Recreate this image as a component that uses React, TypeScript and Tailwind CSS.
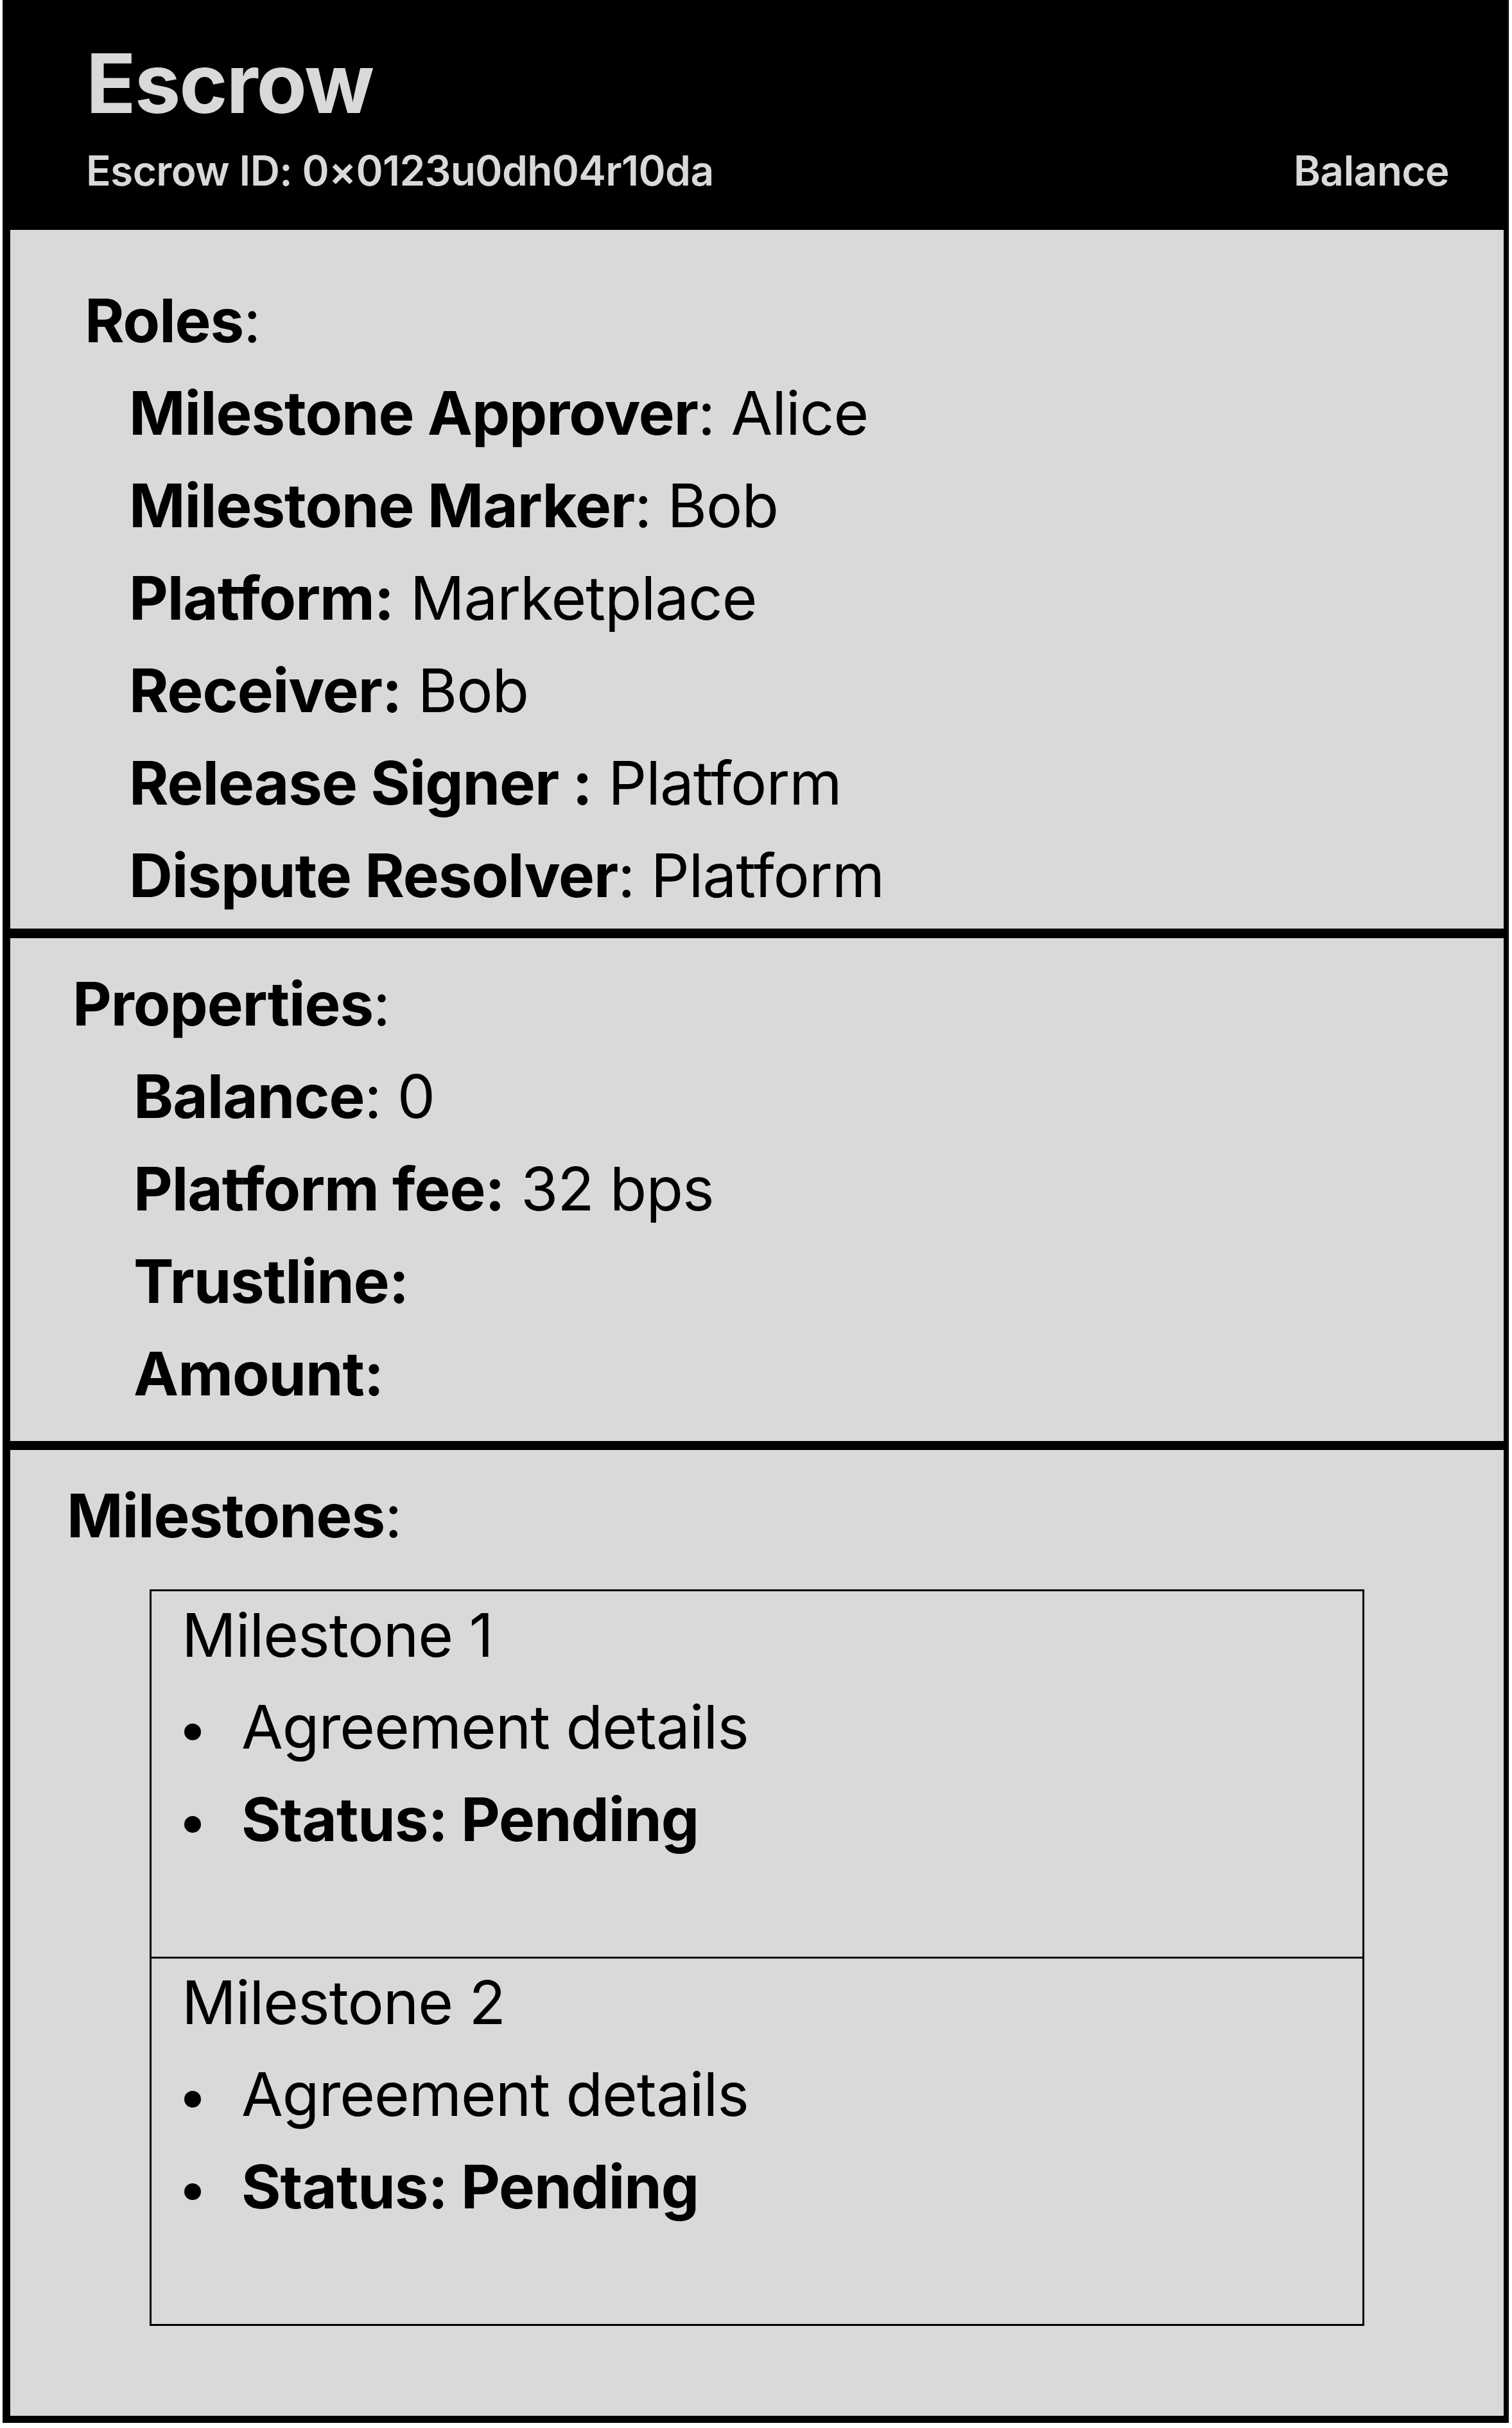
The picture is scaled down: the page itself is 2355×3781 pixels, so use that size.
import React from "react";

type Row = { label: string; colon: "bold" | "regular"; value?: string };

const roles: Row[] = [
  { label: "Milestone Approver", colon: "regular", value: "Alice" },
  { label: "Milestone Marker", colon: "regular", value: "Bob" },
  { label: "Platform:", colon: "bold", value: "Marketplace" },
  { label: "Receiver:", colon: "bold", value: "Bob" },
  { label: "Release Signer :", colon: "bold", value: "Platform" },
  { label: "Dispute Resolver", colon: "regular", value: "Platform" },
];

const properties: Row[] = [
  { label: "Balance", colon: "regular", value: "0" },
  { label: "Platform fee:", colon: "bold", value: "32 bps" },
  { label: "Trustline:", colon: "bold" },
  { label: "Amount:", colon: "bold" },
];

function FieldRow({ row }: { row: Row }) {
  return (
    <p className="whitespace-pre">
      <span className="font-bold">{row.label}</span>
      {row.colon === "regular" ? ":" : ""}
      {row.value ? ` ${row.value}` : ""}
    </p>
  );
}

function Heading({ text }: { text: string }) {
  return (
    <p>
      <span className="font-bold">{text}</span>:
    </p>
  );
}

function Bullet({ children, bold }: { children: React.ReactNode; bold?: boolean }) {
  return (
    <li className="flex items-start">
      <span className="ml-[4px] mt-[67px] h-[26px] w-[26px] shrink-0 rounded-full bg-black" />
      <span className={`ml-[63px] ${bold ? "font-bold" : ""}`}>{children}</span>
    </li>
  );
}

function MilestoneCard({ title, className }: { title: string; className?: string }) {
  return (
    <div className={`h-[575px] border-[3px] border-black pl-[47px] ${className ?? ""}`}>
      <p className="leading-[136px]">{title}</p>
      <ul className="mt-[3px]">
        <Bullet>Agreement details</Bullet>
        <Bullet bold>Status: Pending</Bullet>
      </ul>
    </div>
  );
}

export default function App() {
  return (
    <div className="min-h-screen bg-white font-['Inter',sans-serif] text-black [font-variant-ligatures:none] [font-feature-settings:'calt'_0,'liga'_0]">
      <div className="ml-[4px] w-[2346px]">
        <header className="h-[358px] bg-black pl-[130px] pr-[93px] pt-[66px] text-[#d9d9d9]">
          <h1 className="text-[128px] font-bold leading-[128px] tracking-[-0.016em]">Escrow</h1>
          <div className="mt-[40px] flex justify-between text-[64px] font-semibold leading-[64px] tracking-[-0.01em]">
            <span>Escrow ID: 0×0123u0dh04r10da</span>
            <span>Balance</span>
          </div>
        </header>

        <section className="border-b-[8px] border-l-[12px] border-r-[8px] border-black bg-[#d9d9d9] pb-[11px] pl-[116px] pt-[69px] text-[94px] leading-[144px] tracking-[-0.011em]">
          <Heading text="Roles" />
          <div className="ml-[69px]">
            {roles.map((r) => (
              <FieldRow key={r.label} row={r} />
            ))}
          </div>
        </section>

        <section className="border-b-[7px] border-l-[12px] border-r-[8px] border-t-[7px] border-black bg-[#d9d9d9] pb-[33px] pl-[97px] pt-[30px] text-[94px] leading-[144px] tracking-[-0.011em]">
          <Heading text="Properties" />
          <div className="ml-[95px]">
            {properties.map((r) => (
              <FieldRow key={r.label} row={r} />
            ))}
          </div>
        </section>

        <section className="border-b-[11px] border-l-[12px] border-r-[8px] border-t-[7px] border-black bg-[#d9d9d9] pb-[140px] pt-[30px] text-[94px] leading-[144px] tracking-[-0.011em]">
          <div className="pl-[88px]">
            <Heading text="Milestones" />
          </div>
          <div className="ml-[217px] mt-[43px] w-[1892px]">
            <MilestoneCard title="Milestone 1" />
            <MilestoneCard title="Milestone 2" className="-mt-[3px]" />
          </div>
        </section>
      </div>
    </div>
  );
}
